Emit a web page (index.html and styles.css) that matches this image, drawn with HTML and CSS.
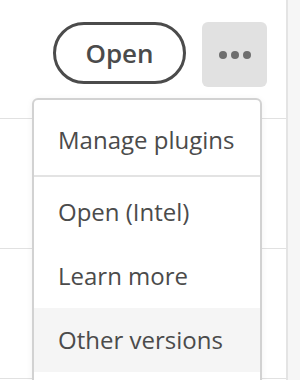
FILE: index.html
```html
<!DOCTYPE html>
<html lang="en">
  <head>
    <meta charset="UTF-8" />
    <meta name="viewport" content="width=device-width, initial-scale=1.0" />
    <title>Plugin actions</title>
    <link rel="stylesheet" href="styles.css">
  </head>
  <body>
    <div id="page">
      <div id="main">
        <div class="toolbar">
          <button class="btn-open">Open</button>
          <button class="btn-more" aria-label="More actions">
            <span class="dot"></span><span class="dot"></span><span class="dot"></span>
          </button>
        </div>
        <div class="row"></div>
        <div class="row"></div>

        <ul class="menu">
          <li>Manage plugins</li>
          <li class="divider"></li>
          <li>Open (Intel)</li>
          <li>Learn more</li>
          <li class="hover">Other versions</li>
        </ul>
      </div>
      <div id="side"></div>
    </div>
  </body>
</html>
```

FILE: styles.css
```css
* {
  margin: 0;
  padding: 0;
  box-sizing: border-box;
}
body {
  font-family: "Open Sans", "Liberation Sans", sans-serif;
  color: #4b4b4b;
  background-color: #fff;
}
ul li {
  list-style: none;
}
#page {
  display: flex;
  height: 380px;
  overflow: hidden;
}
#main {
  position: relative;
  width: 286px;
}
#side {
  flex: 1;
  border-left: 2px solid #e4e4e4;
  background-color: #f6f6f6;
}
.toolbar {
  height: 119px;
  display: flex;
  justify-content: flex-end;
  align-items: flex-start;
  gap: 16px;
  padding: 22px 19px 0 0;
  border-bottom: 1px solid #e1e1e1;
}
.btn-open {
  width: 133px;
  height: 62px;
  border: 3px solid #4b4b4b;
  border-radius: 31px;
  background: #fff;
  font-family: inherit;
  font-size: 26px;
  font-weight: 600;
  color: #4b4b4b;
}
.btn-more {
  width: 65px;
  height: 65px;
  border: none;
  border-radius: 6px;
  background-color: #e1e1e1;
  display: flex;
  justify-content: center;
  align-items: center;
  gap: 4px;
}
.dot {
  width: 8px;
  height: 8px;
  border-radius: 50%;
  background-color: #6e6e6e;
}
.row {
  height: 130px;
  border-bottom: 1px solid #e1e1e1;
}
.menu {
  position: absolute;
  top: 98px;
  left: 32px;
  width: 230px;
  height: 300px;
  padding-top: 8px;
  background-color: #fff;
  border: 2px solid #d2d2d2;
  border-radius: 6px;
  box-shadow: 0 1px 6px rgba(0, 0, 0, 0.06);
}
.menu > li {
  height: 64px;
  line-height: 64px;
  padding-left: 24px;
  font-size: 24px;
  color: #4b4b4b;
  white-space: nowrap;
}
.menu > li.divider {
  height: 2px;
  margin: 3px 0 3px;
  background-color: #e3e3e3;
}
.menu > li.hover {
  background-color: #f5f5f5;
}
```
